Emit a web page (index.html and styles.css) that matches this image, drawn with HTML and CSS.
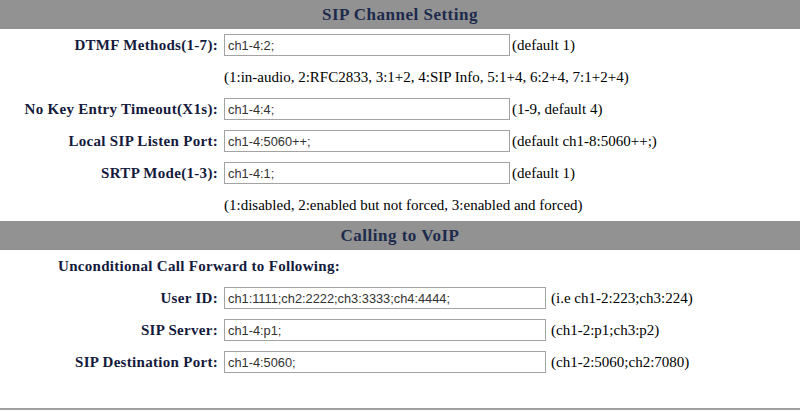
FILE: index.html
```html
<!DOCTYPE html>
<html lang="en">
<head>
    <meta charset="UTF-8">
    <title>SIP Channel Setting</title>
    <link rel="stylesheet" href="styles.css">
</head>
<body>

    <form action="/sip_channel" method="post">
        <div class="section-title">SIP Channel Setting</div>
        <table class="form-table">
            <tr>
                <td class="label">DTMF Methods(1-7):</td>
                <td class="field"><input type="text" name="dtmf" value="ch1-4:2;"><span class="hint">(default 1)</span></td>
            </tr>
            <tr>
                <td></td>
                <td class="field">(1:in-audio, 2:RFC2833, 3:1+2, 4:SIP Info, 5:1+4, 6:2+4, 7:1+2+4)</td>
            </tr>
            <tr>
                <td class="label">No Key Entry Timeout(X1s):</td>
                <td class="field"><input type="text" name="key_timeout" value="ch1-4:4;"><span class="hint">(1-9, default 4)</span></td>
            </tr>
            <tr>
                <td class="label">Local SIP Listen Port:</td>
                <td class="field"><input type="text" name="listen_port" value="ch1-4:5060++;"><span class="hint">(default ch1-8:5060++;)</span></td>
            </tr>
            <tr>
                <td class="label">SRTP Mode(1-3):</td>
                <td class="field"><input type="text" name="srtp" value="ch1-4:1;"><span class="hint">(default 1)</span></td>
            </tr>
            <tr>
                <td></td>
                <td class="field">(1:disabled, 2:enabled but not forced, 3:enabled and forced)</td>
            </tr>
        </table>

        <div class="section-title">Calling to VoIP</div>
        <table class="form-table wide">
            <tr>
                <td class="sub-title" colspan="2">Unconditional Call Forward to Following:</td>
            </tr>
            <tr>
                <td class="label">User ID:</td>
                <td class="field"><input type="text" name="user_id" value="ch1:1111;ch2:2222;ch3:3333;ch4:4444;"><span class="hint">(i.e ch1-2:223;ch3:224)</span></td>
            </tr>
            <tr>
                <td class="label">SIP Server:</td>
                <td class="field"><input type="text" name="sip_server" value="ch1-4:p1;"><span class="hint">(ch1-2:p1;ch3:p2)</span></td>
            </tr>
            <tr>
                <td class="label">SIP Destination Port:</td>
                <td class="field"><input type="text" name="dest_port" value="ch1-4:5060;"><span class="hint">(ch1-2:5060;ch2:7080)</span></td>
            </tr>
        </table>
        <div class="bottom-rule"></div>
    </form>

</body>
</html>
```

FILE: styles.css
```css
/* Page */
body {
    margin: 0;
    background-color: white;
    font-family: "Liberation Serif", "Times New Roman", serif;
    font-size: 15px;
    color: black;
}

/* Grey section bars */
.section-title {
    background-color: #929292;
    color: #1c2a4c;
    font-weight: bold;
    font-size: 17px;
    letter-spacing: 0.5px;
    text-align: center;
    height: 29px;
    line-height: 30px;
}

.form-table {
    width: 100%;
    border-collapse: collapse;
}

.form-table td {
    padding: 0;
    height: 32px;
    white-space: nowrap;
}

.label {
    width: 218px;
    text-align: right;
    padding-right: 6px !important;
    font-weight: bold;
    letter-spacing: 0.3px;
    color: #141a3c;
}

.field {
    text-align: left;
}

.field input {
    box-sizing: border-box;
    width: 286px;
    height: 22px;
    margin: 0 2px 0 0;
    padding: 0 3px;
    border: 1px solid #a3a3a3;
    font-family: "Liberation Sans", Arial, sans-serif;
    font-size: 12.8px;
    color: #333;
    vertical-align: middle;
}

.hint {
    vertical-align: middle;
}

.wide .field input {
    width: 322px;
    margin-right: 5px;
}

.sub-title {
    padding-left: 58px !important;
    font-weight: bold;
    letter-spacing: 0.3px;
    color: #141a3c;
}

.bottom-rule {
    margin-top: 30px;
    border-top: 2px solid #a0a0a0;
}
```
